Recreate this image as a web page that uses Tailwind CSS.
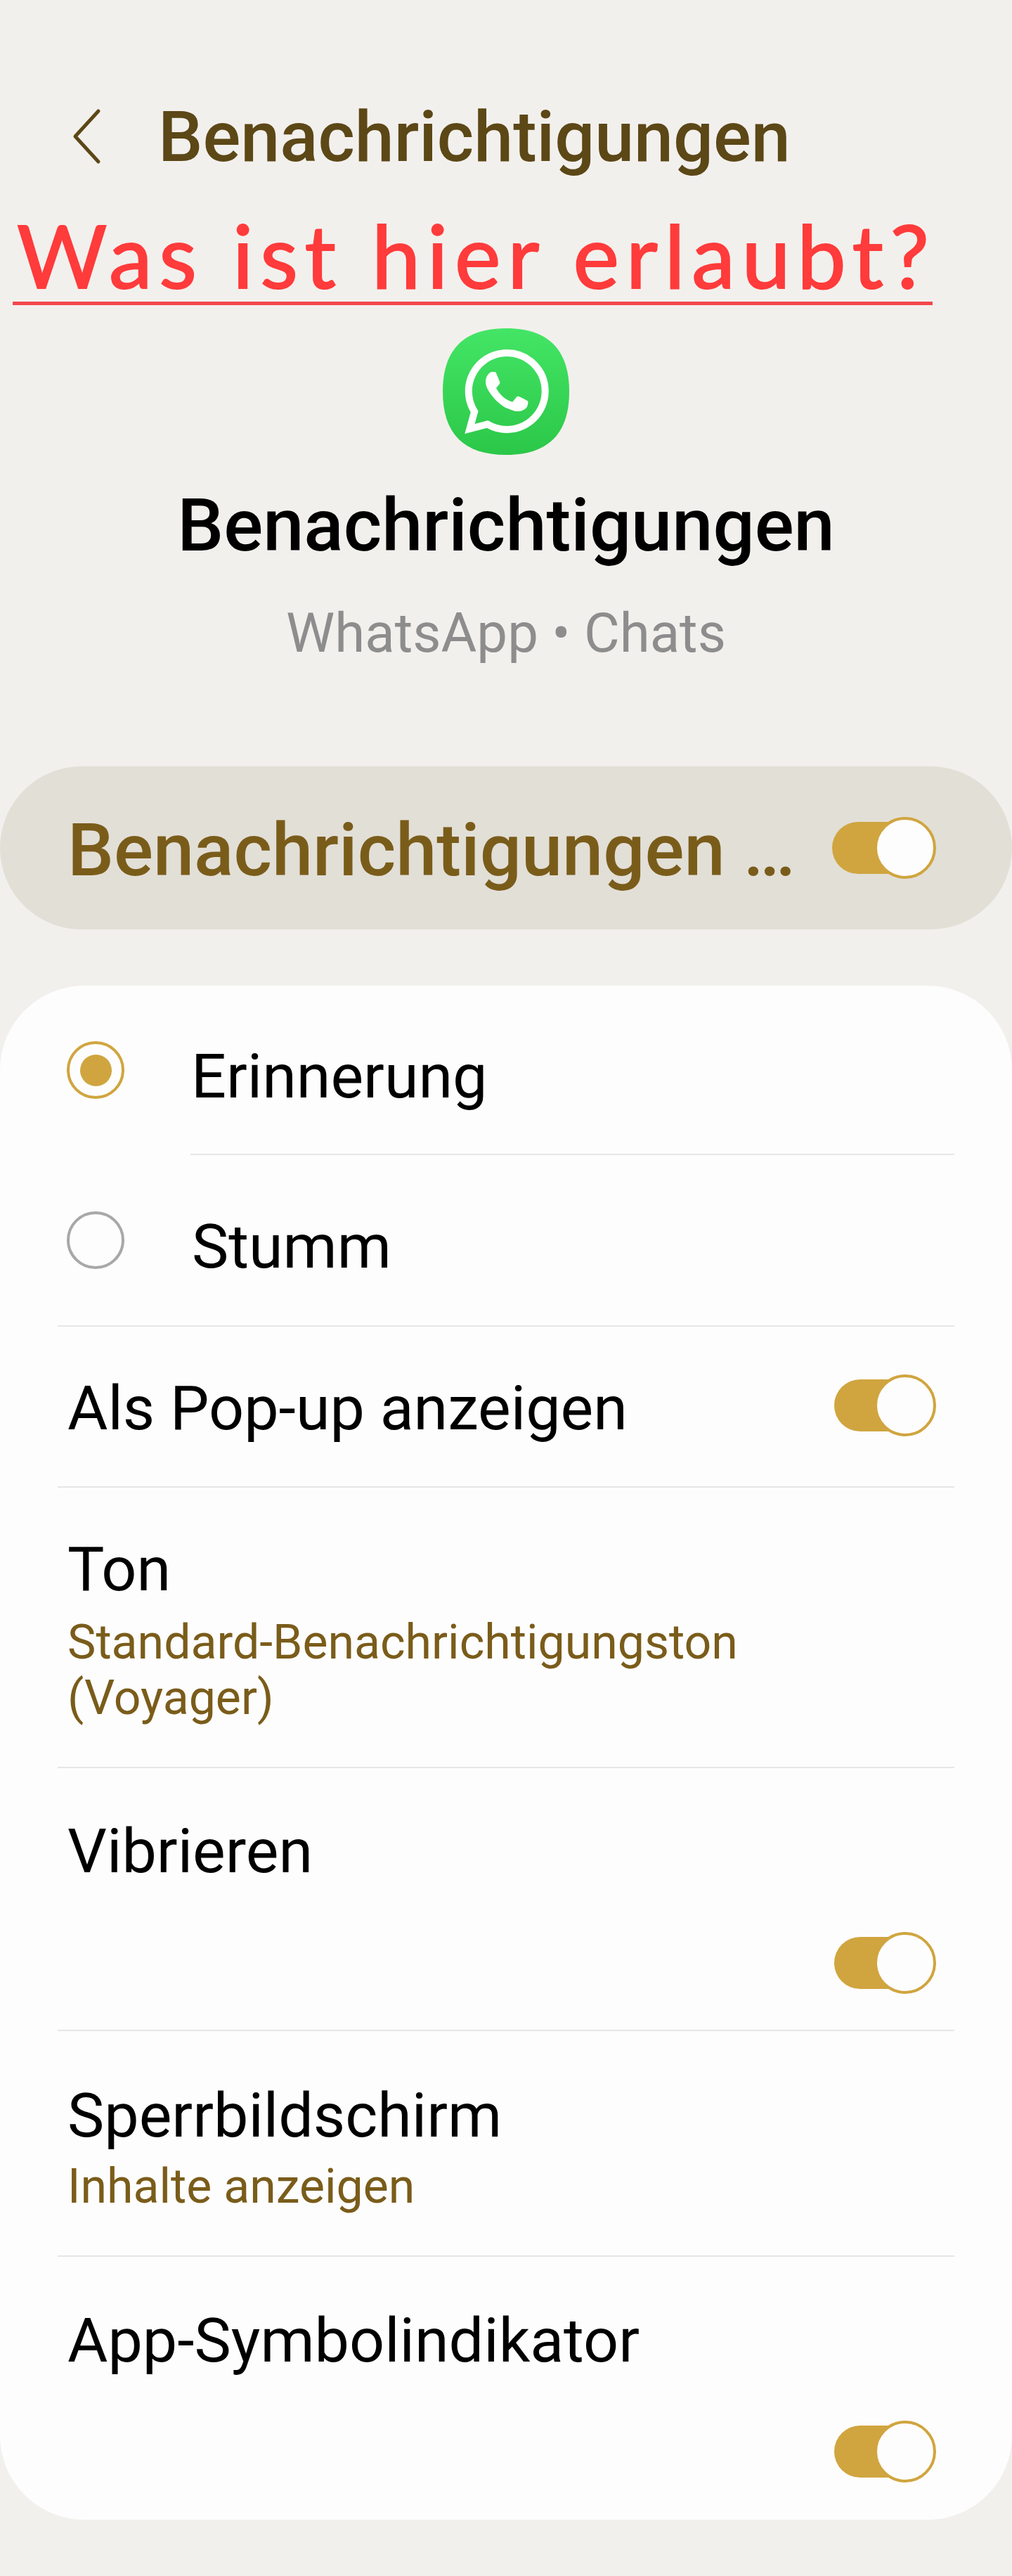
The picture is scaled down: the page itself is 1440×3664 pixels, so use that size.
<!DOCTYPE html>
<html lang="de">
<head>
  <meta charset="UTF-8" />
  <title>Benachrichtigungen</title>
  <script src="https://cdn.jsdelivr.net/npm/@tailwindcss/browser@4"></script>
</head>
<body class="bg-[#f2f0ed] font-['Roboto',sans-serif] text-black">
  <div class="w-[1440px] h-[3664px] flex flex-col overflow-hidden">

    <!-- top bar -->
    <div class="h-[272px] pl-[102px] pt-[124px] flex items-start">
      <svg class="w-[44px] h-[80px] mt-[30px]" viewBox="0 0 44 80" fill="none" stroke="#5c4716" stroke-width="5" stroke-linecap="round" stroke-linejoin="round"><path d="M38 4 5 40l33 36" /></svg>
      <span class="ml-[79px] mt-[12px] text-[100.5px] leading-[118px] font-medium text-[#5c4716]">Benachrichtigungen</span>
    </div>

    <!-- annotation -->
    <div class="h-[164px] pl-[18px]">
      <div class="w-[1309px] h-[162px] border-b-[5px] border-[#f4474c] pl-[6px] pt-[20px] font-['Lato',sans-serif] text-[124px] leading-[140px] tracking-[9.6px] [-webkit-text-stroke:2px_#ff3b3b] text-[#ff3b3b] whitespace-nowrap">Was ist hier erlaubt?</div>
    </div>

    <!-- app info -->
    <div class="h-[654px] flex flex-col items-center pt-[31px]">
      <svg class="w-[180px] h-[180px]" viewBox="0 0 180 180">
        <defs>
          <linearGradient id="wa" x1="0" y1="0" x2="0" y2="1">
            <stop offset="0" stop-color="#44e566" />
            <stop offset="1" stop-color="#2bc748" />
          </linearGradient>
        </defs>
        <path fill="url(#wa)" d="M90 0C150 0 180 30 180 90S150 180 90 180 0 150 0 90 30 0 90 0Z" />
        <path transform="translate(31 30) scale(5)" fill="#fff" d="M17.472 14.382c-.297-.149-1.758-.867-2.03-.967-.273-.099-.471-.148-.67.15-.197.297-.767.966-.94 1.164-.173.199-.347.223-.644.075-.297-.15-1.255-.463-2.39-1.475-.883-.788-1.48-1.761-1.653-2.059-.173-.297-.018-.458.13-.606.134-.133.298-.347.446-.52.149-.174.198-.298.298-.497.099-.198.05-.371-.025-.52-.075-.149-.669-1.612-.916-2.207-.242-.579-.487-.5-.669-.51-.173-.008-.371-.01-.57-.01-.198 0-.52.074-.792.372-.272.297-1.04 1.016-1.04 2.479 0 1.462 1.065 2.875 1.213 3.074.149.198 2.096 3.2 5.077 4.487.709.306 1.262.489 1.694.625.712.227 1.36.195 1.871.118.571-.085 1.758-.719 2.006-1.413.248-.694.248-1.289.173-1.413-.074-.124-.272-.198-.57-.347m-5.421 7.403h-.004a9.87 9.87 0 01-5.031-1.378l-.361-.214-3.741.982.998-3.648-.235-.374a9.86 9.86 0 01-1.51-5.26c.001-5.45 4.436-9.884 9.888-9.884 2.64 0 5.122 1.03 6.988 2.898a9.825 9.825 0 012.893 6.994c-.003 5.45-4.437 9.884-9.885 9.884m8.413-18.297A11.815 11.815 0 0012.05 0C5.495 0 .16 5.335.157 11.892c0 2.096.547 4.142 1.588 5.945L.057 24l6.305-1.654a11.882 11.882 0 005.683 1.448h.005c6.554 0 11.89-5.335 11.893-11.893a11.821 11.821 0 00-3.48-8.413z" />
      </svg>
      <div class="mt-[40px] text-[104.5px] leading-[122px] font-medium">Benachrichtigungen</div>
      <div class="mt-[46px] text-[78px] leading-[92px] text-[#8d8d8d]">WhatsApp • Chats</div>
    </div>

    <!-- master switch -->
    <div class="h-[232px] rounded-[116px] bg-[#e2dfd7] pl-[96px] pr-[112px] flex items-center justify-between">
      <span class="mt-[8px] text-[104.5px] leading-[122px] font-medium text-[#7a5c1a]">Benachrichtigungen …</span>
      <div class="relative w-[144px] h-[74px] rounded-full bg-[#d0a53f]">
        <div class="absolute -right-[4px] -top-[7px] w-[88px] h-[88px] rounded-full bg-[#fdfdfd] border-[4px] border-[#d0a53f]"></div>
      </div>
    </div>

    <!-- settings card -->
    <div class="mt-[80px] h-[2182px] rounded-[120px] bg-[#fdfdfd] px-[82px] flex flex-col text-[88px] leading-[104px]">
      <div class="h-[241px] ml-[189px] border-b-2 border-[#e6e6e6] relative flex items-center pt-[18px]">
        <span class="ml-[1px]">Erinnerung</span>
        <div class="absolute -left-[176px] top-[79px] w-[82px] h-[82px] rounded-full border-[4px] border-[#d0a53f] flex items-center justify-center">
          <div class="w-[45px] h-[45px] rounded-full bg-[#d0a53f]"></div>
        </div>
      </div>
      <div class="h-[244px] border-b-2 border-[#e6e6e6] flex items-center pt-[18px]">
        <div class="ml-[13px] w-[82px] h-[82px] rounded-full border-[4px] border-[#a8a8a8] -mt-[18px]"></div>
        <span class="ml-[96px]">Stumm</span>
      </div>
      <div class="h-[229px] border-b-2 border-[#e6e6e6] pl-[14px] flex items-center justify-between pr-[30px]">
        <span class="mt-[4px]">Als Pop-up anzeigen</span>
        <div class="relative w-[141px] h-[74px] mb-[4px] rounded-full bg-[#d0a53f]">
          <div class="absolute -right-[4px] -top-[7px] w-[88px] h-[88px] rounded-full bg-[#fdfdfd] border-[4px] border-[#d0a53f]"></div>
        </div>
      </div>
      <div class="h-[399px] border-b-2 border-[#e6e6e6] pl-[14px] pt-[64px]">
        <div>Ton</div>
        <div class="mt-[13px] text-[68px] leading-[79px] text-[#7a5c1a] w-[1000px]">Standard-Benachrichtigungston (Voyager)</div>
      </div>
      <div class="h-[374px] border-b-2 border-[#e6e6e6] pl-[14px] pr-[30px] pt-[66px] flex flex-col">
        <div>Vibrieren</div>
        <div class="relative mt-[70px] self-end w-[141px] h-[74px] rounded-full bg-[#d0a53f]">
          <div class="absolute -right-[4px] -top-[7px] w-[88px] h-[88px] rounded-full bg-[#fdfdfd] border-[4px] border-[#d0a53f]"></div>
        </div>
      </div>
      <div class="h-[321px] border-b-2 border-[#e6e6e6] pl-[14px] pt-[68px]">
        <div>Sperrbildschirm</div>
        <div class="mt-[10px] text-[68px] leading-[79px] text-[#7a5c1a]">Inhalte anzeigen</div>
      </div>
      <div class="pl-[14px] pr-[30px] pt-[67px] flex flex-col">
        <div>App-Symbolindikator</div>
        <div class="relative mt-[69px] self-end w-[141px] h-[74px] rounded-full bg-[#d0a53f]">
          <div class="absolute -right-[4px] -top-[7px] w-[88px] h-[88px] rounded-full bg-[#fdfdfd] border-[4px] border-[#d0a53f]"></div>
        </div>
      </div>
    </div>
  </div>
</body>
</html>
